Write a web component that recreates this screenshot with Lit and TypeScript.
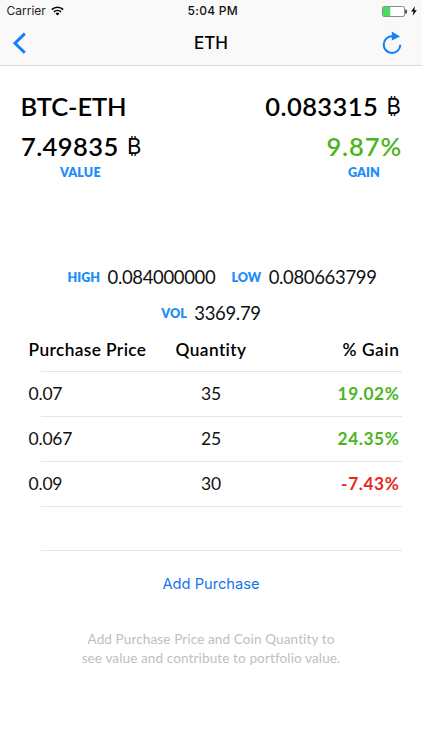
import { LitElement, html, css } from "lit";
import { customElement, property } from "lit/decorators.js";
import { classMap } from "lit/directives/class-map.js";

interface Purchase {
  price: string;
  quantity: string;
  gain: string;
}

const PURCHASES: Purchase[] = [
  { price: "0.07", quantity: "35", gain: "19.02%" },
  { price: "0.067", quantity: "25", gain: "24.35%" },
  { price: "0.09", quantity: "30", gain: "-7.43%" },
];

@customElement("status-bar")
class StatusBar extends LitElement {
  static styles = css`
    :host {
      display: grid;
      grid-template-columns: 1fr auto 1fr;
      height: 21px;
      line-height: 22px;
      padding: 0 5px 0 6.5px;
      font-family: Inter, sans-serif;
      font-size: 12px;
      color: #222;
    }
    .carrier { display: flex; align-items: center; gap: 5px; }
    .time { font-weight: 500; letter-spacing: 0.25px; color: #111; padding-left: 2px; }
    .power { display: flex; align-items: center; justify-content: flex-end; gap: 4px; }
    svg { display: block; }
  `;

  render() {
    return html`
      <div class="carrier">
        <span>Carrier</span>
        <svg width="13" height="10" viewBox="0 0 13 10" fill="none" stroke="#000" stroke-width="1.6">
          <path d="M0.8 3.6a8.2 8.2 0 0 1 11.4 0" />
          <path d="M2.9 5.9a5.2 5.2 0 0 1 7.2 0" />
          <path d="M4.5 7.5a2.9 2.9 0 0 1 4 0L6.5 9.6z" fill="#000" stroke="none" />
        </svg>
      </div>
      <div class="time">5:04 PM</div>
      <div class="power">
        <svg width="25" height="11" viewBox="0 0 25 11">
          <rect x="0.5" y="0.5" width="22" height="10" rx="1.6" fill="#fff" stroke="#8d8d8d" />
          <path d="M1 2a1 1 0 0 1 1-1h6.3v9H2a1 1 0 0 1-1-1z" fill="#4cd964" />
          <path d="M23.5 3.8a1.8 1.8 0 0 1 0 3.6z" fill="#444" stroke="#444" stroke-width="0.6" />
        </svg>
        <svg width="6" height="10" viewBox="0 0 6 10"><path d="M3.9 0.2 0.2 5.6h2.3L1.7 9.8 5.8 4.2H3.4z" fill="#000" /></svg>
      </div>
    `;
  }
}

@customElement("nav-bar")
class NavBar extends LitElement {
  static styles = css`
    :host {
      display: grid;
      grid-template-columns: 1fr auto 1fr;
      align-items: center;
      height: 44px;
      padding: 0 20px 0 12px;
      font: 500 17px/44px Inter, sans-serif;
      color: #000;
    }
    .title { padding-left: 8px; }
    .refresh { justify-self: end; }
    svg { display: block; }
  `;

  render() {
    return html`
      <svg width="14" height="22" viewBox="0 0 14 22" fill="none" stroke="#157efb" stroke-width="3">
        <path d="M12.8 1.6 3 11.2l9.8 9.6" />
      </svg>
      <div class="title">ETH</div>
      <svg class="refresh" width="20" height="24" viewBox="0 0 20 24">
        <path d="M10.8 5.4A8.3 8.3 0 1 0 18.3 13.7" fill="none" stroke="#157efb" stroke-width="2" />
        <path d="M9.8 0.6 18 5.4 9.8 9.6z" fill="#157efb" />
      </svg>
    `;
  }
}

@customElement("coin-summary")
class CoinSummary extends LitElement {
  static styles = css`
    :host { display: block; padding: 20px 21px 0; }
    .row { display: flex; justify-content: space-between; height: 40px; font: 600 25.5px/40px Lato, sans-serif; color: #000; }
    .amount { display: flex; letter-spacing: 0.4px; }
    .pair { letter-spacing: -0.1px; margin-left: -0.5px; }
    .coin { font: 400 22px/41px Inter, sans-serif; letter-spacing: 0; margin-left: 8.5px; }
    .gain { letter-spacing: 0.9px; color: #4cb41e; margin-right: -1px; }
    .labels { display: flex; justify-content: space-between; padding: 0 21px 0 39px; font: 800 12.6px/13px Lato, sans-serif; letter-spacing: 0.1px; color: #1e8df5; }
  `;

  render() {
    return html`
      <div class="row">
        <div class="pair">BTC-ETH</div>
        <div class="amount"><span>0.083315</span><span class="coin">₿</span></div>
      </div>
      <div class="row">
        <div class="amount"><span>7.49835</span><span class="coin">₿</span></div>
        <div class="gain">9.87%</div>
      </div>
      <div class="labels"><span>VALUE</span><span>GAIN</span></div>
    `;
  }
}

@customElement("market-stat")
class MarketStat extends LitElement {
  @property() label = "";
  @property() value = "";

  static styles = css`
    :host { display: flex; align-items: center; gap: 7.5px; line-height: 37px; font-family: Lato, sans-serif; }
    .label { font-size: 12.6px; font-weight: 800; letter-spacing: 0; color: #1e8df5; }
    .value { font-size: 18.5px; letter-spacing: -0.35px; color: #111; }
  `;

  render() {
    return html`<span class="label">${this.label}</span><span class="value">${this.value}</span>`;
  }
}

@customElement("purchase-table")
class PurchaseTable extends LitElement {
  static styles = css`
    :host { display: block; padding: 0 20px 0 28.5px; font: 400 17.5px/44px Lato, sans-serif; color: #111; }
    .row { display: grid; grid-template-columns: 116px 133px 1fr; height: 44px; padding-right: 3px; letter-spacing: -0.2px; }
    .head { height: 40px; line-height: 37px; font-size: 17.3px; font-weight: 600; letter-spacing: 0.4px; color: #000; }
    .line { height: 1px; margin-left: 12.5px; background: #e6e6e6; }
    .price { white-space: nowrap; }
    .quantity { text-align: center; }
    .gain { text-align: right; font-weight: 700; font-size: 17.3px; letter-spacing: 0.6px; margin-right: -0.5px; }
    .head .gain { font-weight: 600; }
    .up { color: #4cb41e; }
    .down { color: #e5291b; }
    .empty { height: 43px; }
  `;

  render() {
    return html`
      <div class="row head">
        <span class="price">Purchase Price</span><span class="quantity">Quantity</span><span class="gain">% Gain</span>
      </div>
      ${PURCHASES.map((p) => {
        const down = p.gain.startsWith("-");
        return html`
          <div class="line"></div>
          <div class="row">
            <span class="price">${p.price}</span>
            <span class="quantity">${p.quantity}</span>
            <span class=${classMap({ gain: true, up: !down, down })}>${p.gain}</span>
          </div>
        `;
      })}
      <div class="line"></div>
      <div class="row empty"></div>
      <div class="line"></div>
    `;
  }
}

@customElement("app-root")
class AppRoot extends LitElement {
  static styles = css`
    :host { display: flex; flex-direction: column; height: 750px; background: #fff; overflow: hidden; }
    header { height: 65px; background: #f9f9f9; border-bottom: 1px solid #d9d9d9; }
    .stats { display: flex; flex-direction: column; padding-top: 80px; }
    .pair { display: flex; justify-content: center; gap: 16px; height: 36px; padding-left: 22px; }
    .single { display: flex; justify-content: center; height: 36px; }
    .add { margin-top: 22px; text-align: center; font: 400 14.7px/22px Inter, sans-serif; color: #1474ee; }
    .hint { margin: 35px 0 0; text-align: center; font: 400 13.6px/19px Lato, sans-serif; letter-spacing: 0.09px; color: #c0c0c0; }
  `;

  render() {
    return html`
      <header>
        <status-bar></status-bar>
        <nav-bar></nav-bar>
      </header>
      <coin-summary></coin-summary>
      <div class="stats">
        <div class="pair">
          <market-stat label="HIGH" value="0.084000000"></market-stat>
          <market-stat label="LOW" value="0.080663799"></market-stat>
        </div>
        <div class="single"><market-stat label="VOL" value="3369.79"></market-stat></div>
      </div>
      <purchase-table></purchase-table>
      <div class="add">Add Purchase</div>
      <p class="hint">Add Purchase Price and Coin Quantity to<br />see value and contribute to portfolio value.</p>
    `;
  }
}
